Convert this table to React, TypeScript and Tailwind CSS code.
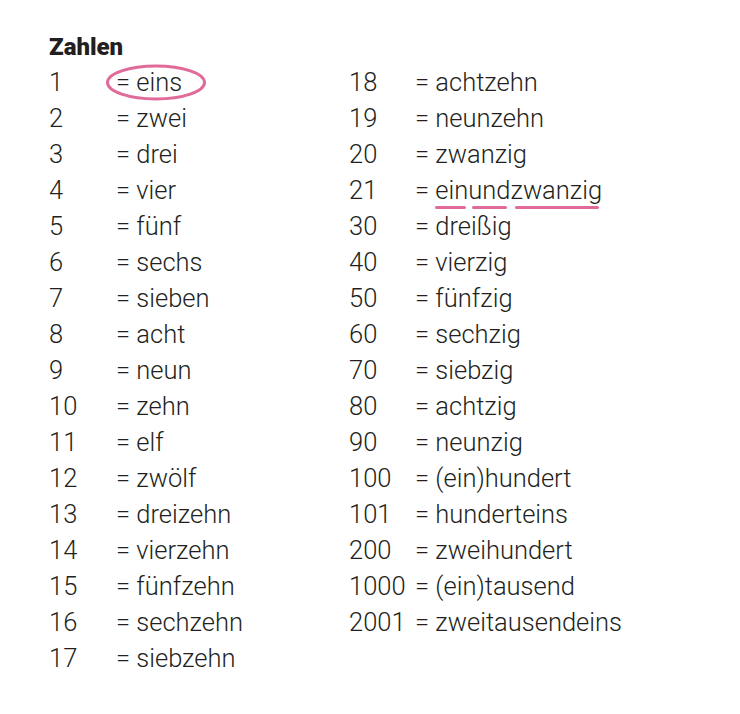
import React from 'react';

const left: [string, string][] = [
  ['1', 'eins'],
  ['2', 'zwei'],
  ['3', 'drei'],
  ['4', 'vier'],
  ['5', 'fünf'],
  ['6', 'sechs'],
  ['7', 'sieben'],
  ['8', 'acht'],
  ['9', 'neun'],
  ['10', 'zehn'],
  ['11', 'elf'],
  ['12', 'zwölf'],
  ['13', 'dreizehn'],
  ['14', 'vierzehn'],
  ['15', 'fünfzehn'],
  ['16', 'sechzehn'],
  ['17', 'siebzehn'],
];

const right: [string, string][] = [
  ['18', 'achtzehn'],
  ['19', 'neunzehn'],
  ['20', 'zwanzig'],
  ['21', 'einundzwanzig'],
  ['30', 'dreißig'],
  ['40', 'vierzig'],
  ['50', 'fünfzig'],
  ['60', 'sechzig'],
  ['70', 'siebzig'],
  ['80', 'achtzig'],
  ['90', 'neunzig'],
  ['100', '(ein)hundert'],
  ['101', 'hunderteins'],
  ['200', 'zweihundert'],
  ['1000', '(ein)tausend'],
  ['2001', 'zweitausendeins'],
];

// pinke Unterstreichung unter einem Wortteil
function Underlined({ children, inset }: { children: React.ReactNode; inset: string }) {
  return (
    <span className="relative inline-block">
      {children}
      <span className={`absolute -bottom-[5px] h-[3px] rounded-full bg-[#e06a99] ${inset}`} />
    </span>
  );
}

function Word({ n, w }: { n: string; w: string }) {
  if (n === '1') {
    return (
      <span className="relative">
        = eins
        <svg className="absolute -left-[10px] -top-[6px] w-[100px] h-[37px] overflow-visible" viewBox="0 0 100 37">
          <ellipse cx="50" cy="18.5" rx="48.5" ry="16.5" stroke="#e06a99" strokeWidth="3" fill="none" />
        </svg>
      </span>
    );
  }
  if (n === '21') {
    return (
      <span>
        = <Underlined inset="left-0 right-[2px]">ein</Underlined>
        <Underlined inset="left-[4px] right-[3px]">und</Underlined>
        <Underlined inset="left-[5px] right-[3px]">zwanzig</Underlined>
      </span>
    );
  }
  return <span>= {w}</span>;
}

function Row({ n, w, wide }: { n: string; w: string; wide: string }) {
  return (
    <div className="flex h-[36px] items-center">
      <span className={wide}>{n}</span>
      <Word n={n} w={w} />
    </div>
  );
}

export default function App() {
  return (
    <div className="min-h-screen w-[740px] bg-white text-[#231f20] pt-[29px] pl-[49px] font-['Roboto',sans-serif] font-[350] text-[25.5px] leading-none">
      <div className="flex">
        <div className="w-[300px]">
          <div className="h-[36px] flex items-center text-[24px] font-black">Zahlen</div>
          {left.map(([n, w]) => (
            <Row key={n} n={n} w={w} wide="w-[67px]" />
          ))}
        </div>
        <div className="pt-[36px]">
          {right.map(([n, w]) => (
            <Row key={n} n={n} w={w} wide="w-[66px]" />
          ))}
        </div>
      </div>
    </div>
  );
}
